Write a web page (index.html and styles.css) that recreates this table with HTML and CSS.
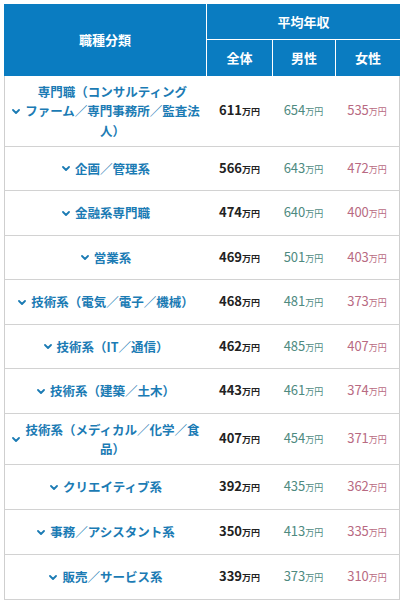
FILE: index.html
```html
<!DOCTYPE html>
<html lang="ja">
<head>
<meta charset="utf-8">
<title>職種分類 平均年収</title>
<link rel="stylesheet" href="styles.css">
</head>
<body>
<table class="salary">
  <colgroup>
    <col class="c-name"><col class="c-all"><col class="c-male"><col class="c-female">
  </colgroup>
  <thead>
    <tr class="hrow">
      <th rowspan="2" class="h-cat">職種分類</th>
      <th colspan="3" class="h-avg">平均年収</th>
    </tr>
    <tr class="hrow sub">
      <th>全体</th><th>男性</th><th>女性</th>
    </tr>
  </thead>
  <tbody>
    <tr class="r3">
      <td class="name"><div class="nm"><svg class="chev" viewBox="0 0 8 5" width="8" height="5"><polyline points="1,1 4,4 7,1"/></svg><span>専門職（コンサルティング<br>ファーム／専門事務所／監査法<br>人）</span></div></td>
      <td class="all">611<small>万円</small></td><td class="male">654<small>万円</small></td><td class="female">535<small>万円</small></td>
    </tr>
    <tr class="r44">
      <td class="name"><div class="nm"><svg class="chev" viewBox="0 0 8 5" width="8" height="5"><polyline points="1,1 4,4 7,1"/></svg><span>企画／管理系</span></div></td>
      <td class="all">566<small>万円</small></td><td class="male">643<small>万円</small></td><td class="female">472<small>万円</small></td>
    </tr>
    <tr class="r45">
      <td class="name"><div class="nm"><svg class="chev" viewBox="0 0 8 5" width="8" height="5"><polyline points="1,1 4,4 7,1"/></svg><span>金融系専門職</span></div></td>
      <td class="all">474<small>万円</small></td><td class="male">640<small>万円</small></td><td class="female">400<small>万円</small></td>
    </tr>
    <tr class="r44">
      <td class="name"><div class="nm"><svg class="chev" viewBox="0 0 8 5" width="8" height="5"><polyline points="1,1 4,4 7,1"/></svg><span>営業系</span></div></td>
      <td class="all">469<small>万円</small></td><td class="male">501<small>万円</small></td><td class="female">403<small>万円</small></td>
    </tr>
    <tr class="r45">
      <td class="name"><div class="nm"><svg class="chev" viewBox="0 0 8 5" width="8" height="5"><polyline points="1,1 4,4 7,1"/></svg><span>技術系（電気／電子／機械）</span></div></td>
      <td class="all">468<small>万円</small></td><td class="male">481<small>万円</small></td><td class="female">373<small>万円</small></td>
    </tr>
    <tr class="r44">
      <td class="name"><div class="nm"><svg class="chev" viewBox="0 0 8 5" width="8" height="5"><polyline points="1,1 4,4 7,1"/></svg><span>技術系（IT／通信）</span></div></td>
      <td class="all">462<small>万円</small></td><td class="male">485<small>万円</small></td><td class="female">407<small>万円</small></td>
    </tr>
    <tr class="r45">
      <td class="name"><div class="nm"><svg class="chev" viewBox="0 0 8 5" width="8" height="5"><polyline points="1,1 4,4 7,1"/></svg><span>技術系（建築／土木）</span></div></td>
      <td class="all">443<small>万円</small></td><td class="male">461<small>万円</small></td><td class="female">374<small>万円</small></td>
    </tr>
    <tr class="r2">
      <td class="name"><div class="nm"><svg class="chev" viewBox="0 0 8 5" width="8" height="5"><polyline points="1,1 4,4 7,1"/></svg><span>技術系（メディカル／化学／食<br>品）</span></div></td>
      <td class="all">407<small>万円</small></td><td class="male">454<small>万円</small></td><td class="female">371<small>万円</small></td>
    </tr>
    <tr class="r45">
      <td class="name"><div class="nm"><svg class="chev" viewBox="0 0 8 5" width="8" height="5"><polyline points="1,1 4,4 7,1"/></svg><span>クリエイティブ系</span></div></td>
      <td class="all">392<small>万円</small></td><td class="male">435<small>万円</small></td><td class="female">362<small>万円</small></td>
    </tr>
    <tr class="r45">
      <td class="name"><div class="nm"><svg class="chev" viewBox="0 0 8 5" width="8" height="5"><polyline points="1,1 4,4 7,1"/></svg><span>事務／アシスタント系</span></div></td>
      <td class="all">350<small>万円</small></td><td class="male">413<small>万円</small></td><td class="female">335<small>万円</small></td>
    </tr>
    <tr class="r45">
      <td class="name"><div class="nm"><svg class="chev" viewBox="0 0 8 5" width="8" height="5"><polyline points="1,1 4,4 7,1"/></svg><span>販売／サービス系</span></div></td>
      <td class="all">339<small>万円</small></td><td class="male">373<small>万円</small></td><td class="female">310<small>万円</small></td>
    </tr>
  </tbody>
</table>
</body>
</html>
```
FILE: styles.css
```css
html, body {
  background: #fff;
}
body {
  margin: 4px;
  font-family: "Noto Sans CJK JP", "Noto Sans", sans-serif;
}
.salary {
  border-collapse: separate;
  border-spacing: 0;
  table-layout: fixed;
  width: 396px;
}
.c-name { width: 203px; }
.c-all { width: 65px; }
.c-male { width: 63px; }
.c-female { width: 65px; }

.salary th {
  background: #0a7cc1;
  color: #fff;
  font-weight: bold;
  font-size: 13px;
  line-height: 18px;
  padding: 0;
  text-align: center;
  vertical-align: middle;
}
.hrow { height: 36px; }
.h-cat {
  font-size: 13.5px;
  border-right: 1px solid #fff;
  padding-top: 2px;
}
.h-avg {
  border-bottom: 1px solid #fff;
}
.sub th + th {
  border-left: 1px solid #fff;
}

.salary td {
  padding: 0;
  border-bottom: 1px solid #d2d2d2;
  vertical-align: middle;
  text-align: center;
}
.salary td:first-child { border-left: 1px solid #cfcfcf; }
.salary td:last-child { border-right: 1px solid #cfcfcf; }

.r3 { height: 71px; }
.r2 { height: 51px; }
.r44 { height: 44px; }
.r45 { height: 45px; }

.name {
  padding: 5px 4px 5px 7px;
}
.nm {
  display: flex;
  align-items: center;
  justify-content: center;
  gap: 5px;
  color: #1b7bb4;
  font-weight: bold;
  font-size: 12.5px;
  line-height: 19.5px;
}
.nm span {
  text-align: center;
}
.chev {
  flex: none;
  fill: none;
  stroke: #1b7bb4;
  stroke-width: 1.8;
  stroke-linecap: round;
  stroke-linejoin: round;
}

.all, .male, .female {
  font-size: 13px;
  line-height: 20px;
}
.salary small {
  font-size: 9px;
}
.all {
  color: #222;
  font-weight: bold;
}
.male {
  color: #4e8a7f;
}
.female {
  color: #b86a82;
}
```
